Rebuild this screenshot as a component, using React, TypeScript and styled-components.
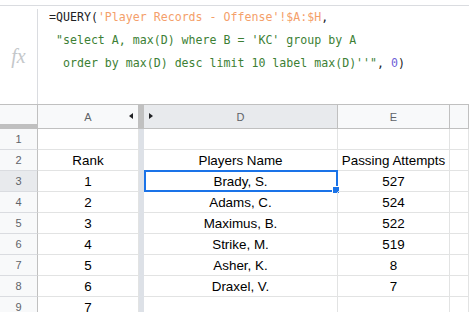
import React from 'react';
import styled, { createGlobalStyle, css } from 'styled-components';

const GlobalStyle = createGlobalStyle`
  html, body {
    margin: 0;
    padding: 0;
    background: #ffffff;
    overflow: hidden;
  }
  body {
    font-family: 'Liberation Sans', Arial, sans-serif;
  }
`;

const Page = styled.div`
  width: 469px;
  height: 312px;
  padding-top: 5px;
  box-sizing: border-box;
  overflow: hidden;
`;

const FormulaBar = styled.div`
  display: flex;
  height: 99px;
  border-top: 1px solid #dadce0;
  box-sizing: border-box;
`;

const FxBox = styled.div`
  width: 37px;
  display: flex;
  align-items: center;
  justify-content: center;
  padding-top: 2px;
  box-sizing: border-box;
  font-family: 'Liberation Serif', 'Times New Roman', serif;
  font-style: italic;
  font-size: 20px;
  color: #c4c7ca;
`;

const Divider = styled.div`
  width: 1px;
  margin: 3px 0 0;
  background: #dadce0;
`;

const FormulaText = styled.pre`
  margin: 0;
  padding: 0 0 0 11px;
  font-family: 'DejaVu Sans Mono', 'Liberation Mono', monospace;
  font-size: 11.6px;
  line-height: 23px;
  color: #202124;
  white-space: pre;
`;

const Tok = styled.span<{ $kind: 'range' | 'str' | 'num' | 'plain' }>`
  color: ${(p) =>
    p.$kind === 'range' ? '#f4a06a' : p.$kind === 'str' ? '#3d7f35' : p.$kind === 'num' ? '#6f5fd8' : '#202124'};
`;

const Grid = styled.div`
  display: grid;
  grid-template-columns: 38px 101px 5px 194px 112px 1fr;
  grid-template-rows: 24px;
  grid-auto-rows: 21px;
  border-top: 1px solid #c0c0c0;
`;

const HeadCell = styled.div<{ $active?: boolean; $corner?: boolean }>`
  position: relative;
  box-sizing: border-box;
  background: ${(p) => (p.$active ? '#e8eaed' : '#f8f9fa')};
  border-right: 1px solid #c0c0c0;
  border-bottom: 1px solid #c0c0c0;
  display: flex;
  align-items: center;
  justify-content: center;
  font-size: 11px;
  color: #5f6368;
  ${(p) =>
    p.$corner &&
    css`
      border-bottom: 5px solid #c0c0c0;
    `}
`;

const FrozenBar = styled.div<{ $head?: boolean }>`
  background: ${(p) => (p.$head ? '#c0c0c0' : '#dde1e7')};
`;

const Arrow = styled.span<{ $side: 'left' | 'right' }>`
  position: absolute;
  top: 8px;
  ${(p) => (p.$side === 'left' ? 'right: 5px;' : 'left: 5px;')}
  width: 0;
  height: 0;
  border-top: 3.5px solid transparent;
  border-bottom: 3.5px solid transparent;
  ${(p) => (p.$side === 'left' ? 'border-right: 4px solid #202124;' : 'border-left: 4px solid #202124;')}
`;

const RowHead = styled.div<{ $active?: boolean }>`
  box-sizing: border-box;
  background: ${(p) => (p.$active ? '#e8eaed' : '#f8f9fa')};
  border-right: 1px solid #c0c0c0;
  border-bottom: 1px solid #dadce0;
  display: flex;
  align-items: center;
  justify-content: center;
  font-size: 11px;
  color: #5f6368;
`;

const Cell = styled.div`
  position: relative;
  box-sizing: border-box;
  border-right: 1px solid #e2e3e3;
  border-bottom: 1px solid #e2e3e3;
  display: flex;
  align-items: center;
  justify-content: center;
  padding-top: 1px;
  font-size: 13.4px;
  color: #000000;
  white-space: nowrap;
`;

const Selection = styled.div`
  position: absolute;
  left: 0;
  top: -1px;
  right: -1px;
  bottom: -1px;
  border: 2px solid #1a73e8;
  pointer-events: none;
`;

const Handle = styled.div`
  position: absolute;
  right: -4px;
  bottom: -4px;
  width: 6px;
  height: 6px;
  background: #1a73e8;
  border: 1px solid #ffffff;
`;

const rows: [string, string, string][] = [
  ['', '', ''],
  ['Rank', 'Players Name', 'Passing Attempts'],
  ['1', 'Brady, S.', '527'],
  ['2', 'Adams, C.', '524'],
  ['3', 'Maximus, B.', '522'],
  ['4', 'Strike, M.', '519'],
  ['5', 'Asher, K.', '8'],
  ['6', 'Draxel, V.', '7'],
  ['7', '', ''],
];

const App: React.FC = () => {
  return (
    <>
      <GlobalStyle />
      <Page>
        <FormulaBar>
          <FxBox>fx</FxBox>
          <Divider />
          <FormulaText>
            <Tok $kind="plain">=QUERY(</Tok>
            <Tok $kind="range">'Player Records - Offense'!$A:$H</Tok>
            <Tok $kind="plain">,</Tok>
            {'\n'}
            <Tok $kind="str">{` "select A, max(D) where B = 'KC' group by A`}</Tok>
            {'\n'}
            <Tok $kind="str">{`  order by max(D) desc limit 10 label max(D)''"`}</Tok>
            <Tok $kind="plain">, </Tok>
            <Tok $kind="num">0</Tok>
            <Tok $kind="plain">)</Tok>
          </FormulaText>
        </FormulaBar>

        <Grid>
          <HeadCell $corner />
          <HeadCell>
            A
            <Arrow $side="left" />
          </HeadCell>
          <FrozenBar $head />
          <HeadCell $active>
            <Arrow $side="right" />
            D
          </HeadCell>
          <HeadCell>E</HeadCell>
          <HeadCell />

          {rows.map((r, i) => {
            const n = i + 1;
            return (
              <React.Fragment key={n}>
                <RowHead $active={n === 3}>{n}</RowHead>
                <Cell>{r[0]}</Cell>
                <FrozenBar />
                <Cell>
                  {r[1]}
                  {n === 3 && (
                    <Selection>
                      <Handle />
                    </Selection>
                  )}
                </Cell>
                <Cell>{r[2]}</Cell>
                <Cell />
              </React.Fragment>
            );
          })}
        </Grid>
      </Page>
    </>
  );
};

export default App;
